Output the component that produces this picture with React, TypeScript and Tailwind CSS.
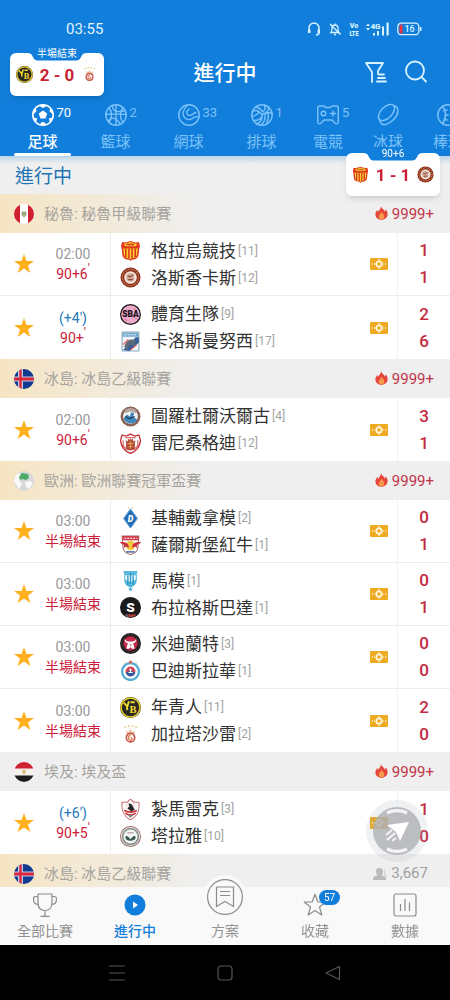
import React from "react";

type IconName =
  | "soccer" | "basket" | "tennis" | "volley" | "game" | "puck" | "base";

const cjk = "font-['Roboto','Noto_Sans_CJK_TC',sans-serif]";

function SportIcon({ name }: { name: IconName }) {
  const common = {
    viewBox: "0 0 24 24",
    className: "size-6",
    fill: "none",
    stroke: "currentColor",
    strokeWidth: 1.4,
    strokeLinecap: "round" as const,
    strokeLinejoin: "round" as const,
    "aria-hidden": true,
  };
  switch (name) {
    case "soccer":
      return (
        <svg {...common}>
          <circle cx="12" cy="12" r="10.2" strokeWidth="1.6" />
          <g fill="currentColor" stroke="none">
            <path d="M12 7.6l4.2 3-1.6 4.9H9.4l-1.6-4.9z" />
            <path d="M7.8 2.8L12 4.9l4.2-2.1L12 1.6zM1.8 11.4l3.6-3-.6-3.6-2.2 2.9zM22.2 11.4l-3.6-3 .6-3.6 2.2 2.9zM5 19.2l1.2-3.8-3.6-.8 1 2.6zM19 19.2l-1.2-3.8 3.6-.8-1 2.6zM9 21.9l1.2-2.6h3.6l1.2 2.6-3 .4z" />
          </g>
        </svg>
      );
    case "basket":
      return (
        <svg {...common}>
          <circle cx="12" cy="12" r="10.2" />
          <path d="M12 2v20M2 11.5c7-1 13-.8 20 0M5 4.8c3.4 3.8 3.400 10.600 0 14.400M19 4.800c-3.400 3.800-3.400 10.600 0 14.400M8.500 2.500c0 7 6 7 12 5M4 18c4-5 9-3 12 3" />
        </svg>
      );
    case "tennis":
      return (
        <svg {...common}>
          <circle cx="12" cy="12" r="10.200" />
          <path d="M10.500 2c-1 1.500-2.500 2.500-3.500 5-1.200 3-1 6.500 1.500 8.500 2.500 2 5.500 1 7.500-.5 2-1.600 4-1.500 6-1.200M12.500 6c-1.800.8-3 2.300-2.700 4 .3 2 2.200 2.800 4 2.200 2-.7 3-2.200 5-2.700" strokeWidth="1.300" />
        </svg>
      );
    case "volley":
      return (
        <svg {...common}>
          <circle cx="12" cy="12" r="10.200" />
          <path d="M12 11.500C9 8 5.500 6.800 3 8M13 9C10.500 5.500 8 4 5.500 4.200M12 11.500c4.500-1.500 7-4.500 6.500-7.500M12 11.500c.5 4.500-1.500 8-5.500 9.500M15 10.500c.5 4.500-.5 9-4.500 11.500M15 10.500c3.500-1.500 5.500-1.500 7 0M9.500 9c-2.500 2.500-6 4.500-7.300 4M11.800 14c-2 2.500-5 3.800-7.800 3.500M18 9.800c.8 3.500.2 7-1.500 10.500M13 9c1.800-1.500 2.500-4 1.500-6.500" />
        </svg>
      );
    case "game":
      return (
        <svg {...common}>
          <path d="M3.500 3h4.200c1 0 1.200 1.500 2.300 1.500h4c1.100 0 1.300-1.500 2.300-1.500h4.200c1.200 0 1.800 1 1.800 2v13.500c0 2-1.800 3-3.200 1.800L16 17H8l-3.100 3.300c-1.400 1.200-3.200.2-3.200-1.800V5c0-1 .6-2 1.800-2z" />
          <circle cx="7.500" cy="10.500" r="2.300" />
          <path d="M17 8v5M14.500 10.500h5" />
        </svg>
      );
    case "puck":
      return (
        <svg {...common}>
          <ellipse cx="10.500" cy="9.500" rx="10" ry="5.500" transform="rotate(-45 10.500 9.500)" />
          <path d="M3.400 16.600c.5 3.500 3 5.500 6 5 6-1.500 12-7.500 12.500-13.500.2-3-1.500-5-4.300-5.600" />
        </svg>
      );
    default:
      return (
        <svg {...common}>
          <circle cx="12" cy="12" r="10.200" />
          <path d="M6.500 3.500c4 4.500 4 12.500 0 17M17.500 3.500c-4 4.500-4 12.500 0 17M8 8l3-1M9 12h3M8 16l3 1" />
        </svg>
      );
  }
}

const tabs: { label: string; count?: string; icon: IconName; width: string }[] = [
  { label: "足球", count: "70", icon: "soccer", width: "w-[73px]" },
  { label: "籃球", count: "2", icon: "basket", width: "w-[73px]" },
  { label: "網球", count: "33", icon: "tennis", width: "w-[73px]" },
  { label: "排球", count: "1", icon: "volley", width: "w-[73px]" },
  { label: "電競", count: "5", icon: "game", width: "w-[60px]" },
  { label: "冰球", icon: "puck", width: "w-[60px]" },
  { label: "棒球", icon: "base", width: "w-[60px]" },
];

const svgText = {
  textAnchor: "middle" as const,
  fontFamily: "Roboto, sans-serif",
  fontWeight: 900,
};

const crests: Record<string, React.ReactNode> = {
  grau: (
    <>
      <path d="M2 2c3 1 5 0 8-1 3 1 5 2 8 1l1 4c-2 7 0 10-4 12-2 1-4 0-5 2-1-2-3-1-5-2C1 16 3 13 1 6z" fill="#e0391f" />
      <path d="M3 8h14c-1 4 0 8-3 9-2 .6-3 .3-4 1.500C9 17.300 8 17.600 6 17 3 16 4 12 3 8z" fill="#f8d030" />
      <path d="M5.500 8v8.500M8.500 8v9.500M11.500 8v9.500M14.500 8v8.500" stroke="#d8301c" strokeWidth="1.400" />
      <path d="M4 3.500l6-1.500 6 1.500-.5 2.500h-11z" fill="#f6c92d" />
      <path d="M6 5l1.500-1.500L9 5l1.500-1.500L12 5l1.500-1.500" stroke="#c9291d" fill="none" />
    </>
  ),
  chankas: (
    <>
      <circle cx="10" cy="10" r="9.500" fill="#8b2a1e" />
      <circle cx="10" cy="10" r="7.700" fill="none" stroke="#d9a35a" strokeWidth="1.200" strokeDasharray="1 1" />
      <circle cx="10" cy="10" r="6" fill="#f3e8dc" />
      <path d="M6 8c1-3 7-3 8 0l-1 1c2 2 0 5-3 5s-4-2-4-4z" fill="#d2a994" />
      <path d="M7.500 8.500l2 1 3-2M8 12h4" stroke="#843e35" fill="none" />
    </>
  ),
  sba: (
    <>
      <circle cx="10" cy="10" r="10" fill="#1b171b" />
      <circle cx="10" cy="10" r="8.800" fill="#eda9c8" />
      <path d="M3 6l14 9M4 14l3 2M13 4l3 2" stroke="#d783ae" />
      <text x="10" y="12.500" fontSize="8" fill="#17131a" {...svgText}>SBA</text>
    </>
  ),
  mannucci: (
    <>
      <path d="M2 1h16v18H2z" fill="#f3f7fa" stroke="#85a8bd" />
      <path d="M2.500 1.500h15v4h-15z" fill="#73a9ca" />
      <path d="M4 3.500h12" stroke="#e6f3fa" strokeDasharray="2 1" />
      <path d="M3 18L15 6l3 0v5L9 19z" fill="#345e9b" />
      <path d="M4 15c2-5 4-7 7-7l5 1-2 2v5l-2-3-3 1-2 4z" fill="#5c6979" />
      <path d="M3 13l5-5M10 18l6-5" stroke="#d84e56" />
    </>
  ),
  throttur: (
    <>
      <circle cx="10" cy="10" r="9.500" fill="#8c6257" />
      <circle cx="10" cy="10" r="7" fill="#f4f7f9" />
      <path d="M4 5c3-4 9-4 12 0l-1 2c-3-2-7-2-10 0z" fill="#b5a69e" />
      <path d="M3.500 12l3-4 3 2 1-4 3 1-1 3 4 3c-2 5-11 5-13-1z" fill="#3f87bd" />
      <path d="M5 10l4 2 5-2" stroke="#24384d" fill="none" />
    </>
  ),
  reynir: (
    <>
      <path d="M2 2l4 1 4-2 4 2 4-1 1.500 5C19 13 16 17 10 19.500 4 17 1 13 .5 7z" fill="#fff" stroke="#c9333d" strokeWidth="1.300" />
      <path d="M5 4.500h10M3 7v5l4 4M17 7v5l-4 4" stroke="#d34c50" fill="none" />
      <path d="M5.500 7l2 1V5.500l1.700 1L10 5l.8 1.500 1.700-1V8l2-1-.5 8c-2 2-6 2-8 0z" fill="#b34b38" />
      <path d="M7 10h6M8 13h4M10 8v7" stroke="#e8ae61" strokeWidth=".8" />
    </>
  ),
  kyiv: (
    <>
      <path d="M10 2L16.500 11 10 20 3.500 11z" fill="#226bb4" stroke="#5b9bd1" />
      <path d="M7.500.800h1M11.500.800h1" stroke="#d4b145" />
      <text x="10" y="14" fontSize="8.500" fontStyle="italic" fill="#fff" {...svgText}>D</text>
    </>
  ),
  salzburg: (
    <>
      <path d="M2 2h16l-1 12c-1 3-4 5-7 5.500C7 19 4 17 3 14z" fill="#fff" stroke="#a66a68" />
      <path d="M2.500 2h15v4h-15z" fill="#cf3847" />
      <path d="M4 4h12" stroke="#fff" strokeDasharray="2 .8" />
      <circle cx="10" cy="11" r="4.500" fill="#f5c63a" />
      <path d="M-.5 8c4-1 7 0 8.500 2.500l.5 2.500-3-1-2 1.500.5-3zM20.500 8c-4-1-7 0-8.500 2.500l-.5 2.500 3-1 2 1.500-.5-3z" fill="#c92c3d" />
      <path d="M6 17h8" stroke="#5373a8" strokeWidth="1.500" />
    </>
  ),
  malmo: (
    <>
      <path d="M3 1h14l-1 2v6c0 4-2 6-6 8-4-2-6-4-6-8V3z" fill="#58b7dc" />
      <path d="M5 5h10v4l-5 3-5-3z" fill="#f2fbfe" />
      <path d="M7.500 5v9M12.500 5v9M10 3v10" stroke="#2994c0" strokeWidth="1.300" />
      <path d="M10 16.500l.8 1.200h1.500l-1.200 1 .4 1.300-1.500-.8-1.500.8.400-1.300-1.200-1h1.500z" fill="#3eabd5" />
    </>
  ),
  sparta: (
    <>
      <circle cx="10" cy="10" r="10" fill="#1b1a1c" />
      <path d="M5 17.500c3 2 7 2 10 0v-1H5z" fill="#a63933" />
      <path d="M5 17.500l2 1.500 1-2z" fill="#3d6ca4" />
      <text x="10" y="14.500" fontSize="13" fill="#fff" {...svgText}>S</text>
    </>
  ),
  midt: (
    <>
      <circle cx="10" cy="10" r="10" fill="#211b1e" />
      <circle cx="10" cy="10" r="8.300" fill="none" stroke="#665b5f" strokeWidth=".8" strokeDasharray="1 1" />
      <circle cx="10" cy="10" r="6.800" fill="#c42b4c" />
      <path d="M4.500 5.500c.5 1.500 2 2.500 3.500 2.500h4c1.500 0 3-1 3.500-2.500.5 2.500-1 4-3 4.200L14 15H11.500L10 13.500 8.500 15H6l1.500-5.300c-2-.2-3.500-1.700-3-4.200z" fill="#fff" />
      <path d="M9 11h2l-1 1.500z" fill="#c42b4c" />
    </>
  ),
  slovan: (
    <>
      <circle cx="10" cy="11" r="8" fill="#fff" stroke="#54acd1" strokeWidth="2.200" />
      <circle cx="10" cy="11" r="4.700" fill="#d44356" />
      <path d="M5.500 12c3-2 6-2 9 0-.5 2-2 3.500-4.500 3.700-2.500-.2-4-1.700-4.500-3.700z" fill="#315ba0" />
      <path d="M10 8v4M8.700 9.500h2.600M8 12h4" stroke="#fff" />
      <path d="M10 0l.8 1.500L12 2l-1.200.7L10 4l-.8-1.300L8 2l1.200-.5zM4.500 2v2M15.500 2v2" fill="#d65157" stroke="#d98b61" strokeWidth=".5" />
    </>
  ),
  yb: (
    <>
      <circle cx="10" cy="10" r="10" fill="#2b2923" />
      <circle cx="10" cy="10" r="9" fill="none" stroke="#e8d02c" strokeWidth="1.500" />
      <path d="M3.500 5.500l3 3 .5 4M8.500 4L7 9M10 5h4" stroke="#f3d92b" strokeWidth="1.800" fill="none" />
      <text x="12.500" y="15.500" fontSize="10" fill="#f3d92b" {...svgText} fontFamily="Liberation Serif, serif">B</text>
    </>
  ),
  gala: (
    <>
      <path d="M4 3h2M7.500 2h2M11 2h2M14.500 3h2" stroke="#e5c581" strokeWidth="1.200" />
      <path d="M6 6l2 2 2-3 2 3 2-2-.5 4h-7z" fill="#e8b48d" />
      <circle cx="10" cy="13" r="4" fill="#fff7f1" stroke="#c84e49" strokeWidth="1.500" />
      <path d="M10 10.500c-3 1-2 5 0 5 2-.2 2-2.500 0-2.500" stroke="#db7958" fill="none" strokeWidth="1.200" />
    </>
  ),
  zamalek: (
    <>
      <path d="M2 3l5 0 3-3 3 3 5 0c1 8-1 13-8 17C3 16 1 11 2 3z" fill="#fff" stroke="#c9686c" />
      <path d="M5 5l5-2 5 2v3H5z" fill="#f5e8e6" />
      <path d="M4 11c4 2 8 2 12 0M5 13.500c3 2 7 2 10 0" stroke="#ce2f3c" strokeWidth="1.500" fill="none" />
      <path d="M8 4l3 1 3 5-3 2-4-3 2-2z" fill="#262626" />
      <path d="M7 15h6l-3 3z" fill="#838383" />
    </>
  ),
  gaish: (
    <>
      <circle cx="10" cy="10" r="9.500" fill="#fff" stroke="#9b6d6c" strokeWidth="1" />
      <circle cx="10" cy="10" r="7.500" fill="#f1f5f3" stroke="#87928e" strokeWidth="1.600" />
      <path d="M5 10.500c1-1.500 2-1 3.500.5l1.500 1.500 1.500-1.500c1.500-1.500 2.500-2 3.500-.5-.5 3-2.500 3.500-5 3.500s-4.500-.5-5-3.500z" fill="#3c5b50" />
      <path d="M7 6.500h6" stroke="#b98a89" />
    </>
  ),
};

function Crest({ id, size = "size-[21px]" }: { id: string; size?: string }) {
  return (
    <svg viewBox="0 0 20 20" className={`${size} shrink-0`} aria-hidden="true">
      {crests[id]}
    </svg>
  );
}

function Flag({ id }: { id: string }) {
  return (
    <svg viewBox="0 0 20 20" className="size-5 shrink-0 overflow-hidden rounded-full" aria-hidden="true">
      {id === "peru" && (
        <>
          <path d="M0 0h20v20H0z" fill="#fff" />
          <path d="M0 0h6v20H0zM14 0h6v20h-6z" fill="#cf2030" />
          <path d="M8 8h4v3l-2 2-2-2z" fill="#a5b389" stroke="#7f9561" strokeWidth=".7" />
        </>
      )}
      {id === "iceland" && (
        <>
          <path d="M0 0h20v20H0z" fill="#113b91" />
          <path d="M4 0h5v20H4zM0 7.500h20v5H0z" fill="#fff" opacity=".75" />
          <path d="M5.300 0h2.400v20H5.300zM0 8.600h20v2.800H0z" fill="#d9263c" />
        </>
      )}
      {id === "europe" && (
        <>
          <path d="M0 0h20v20H0z" fill="#d5d9da" />
          <path d="M1 4l4-2 3 4-3 3 3 4-3 5-5-7zM11 11l5-1 3 2-4 6-3-2z" fill="#f9f9f9" />
          <path d="M5 6l3-4 6 1 1 4-3 2-4-1-2 1z" fill="#4ca966" />
        </>
      )}
      {id === "egypt" && (
        <>
          <path d="M0 0h20v20H0z" fill="#f5f2ed" />
          <path d="M0 0h20v6.500H0z" fill="#cd2030" />
          <path d="M0 13.500h20V20H0z" fill="#1c1c1e" />
          <path d="M8.500 8h3v3.500h-3z" fill="#dcb368" />
        </>
      )}
    </svg>
  );
}

type Match = {
  time: string;
  added?: boolean;
  state: string;
  tick?: boolean;
  teams: [string, string, string, string][];
};
type League = { flag: string; name: string; hot?: string; viewers?: string; warm: boolean; matches: Match[] };

const half = "半場結束";
const leagues: League[] = [
  {
    flag: "peru", name: "秘魯: 秘魯甲級聯賽", hot: "9999+", warm: true,
    matches: [
      { time: "02:00", state: "90+6", tick: true, teams: [["grau", "格拉烏競技", "[11]", "1"], ["chankas", "洛斯香卡斯", "[12]", "1"]] },
      { time: "(+4')", added: true, state: "90+", tick: true, teams: [["sba", "體育生隊", "[9]", "2"], ["mannucci", "卡洛斯曼努西", "[17]", "6"]] },
    ],
  },
  {
    flag: "iceland", name: "冰島: 冰島乙級聯賽", hot: "9999+", warm: true,
    matches: [
      { time: "02:00", state: "90+6", tick: true, teams: [["throttur", "圖羅杜爾沃爾古", "[4]", "3"], ["reynir", "雷尼桑格迪", "[12]", "1"]] },
    ],
  },
  {
    flag: "europe", name: "歐洲: 歐洲聯賽冠軍盃賽", hot: "9999+", warm: true,
    matches: [
      { time: "03:00", state: half, teams: [["kyiv", "基輔戴拿模", "[2]", "0"], ["salzburg", "薩爾斯堡紅牛", "[1]", "1"]] },
      { time: "03:00", state: half, teams: [["malmo", "馬模", "[1]", "0"], ["sparta", "布拉格斯巴達", "[1]", "1"]] },
      { time: "03:00", state: half, teams: [["midt", "米迪蘭特", "[3]", "0"], ["slovan", "巴迪斯拉華", "[1]", "0"]] },
      { time: "03:00", state: half, teams: [["yb", "年青人", "[11]", "2"], ["gala", "加拉塔沙雷", "[2]", "0"]] },
    ],
  },
  {
    flag: "egypt", name: "埃及: 埃及盃", hot: "9999+", warm: false,
    matches: [
      { time: "(+6')", added: true, state: "90+5", tick: true, teams: [["zamalek", "紮馬雷克", "[3]", "1"], ["gaish", "塔拉雅", "[10]", "0"]] },
    ],
  },
  { flag: "iceland", name: "冰島: 冰島乙級聯賽", viewers: "3,667", warm: true, matches: [] },
];

function StatusIcons() {
  return (
    <div className="flex items-center gap-[7px] text-[#d6f3ff]">
      <svg viewBox="0 0 14 14" className="size-3.5" fill="none" stroke="currentColor" strokeWidth="1.500" aria-hidden="true">
        <path d="M2 8V6a5 5 0 0 1 10 0v5c0 1.300-1 1.800-3 1.800" />
        <path d="M2.200 7.500v3.500M11.800 7.500v3.500" strokeWidth="2.500" />
      </svg>
      <svg viewBox="0 0 14 14" className="size-3.5" fill="none" stroke="currentColor" strokeWidth="1.300" aria-hidden="true">
        <path d="M3 10.500c1-1 1-2.500 1-4.500a3 3 0 0 1 6 0c0 2 0 3.500 1 4.500zM6 12.500h2M7 1.500V3M2 2l10.500 10.500" />
      </svg>
      <svg viewBox="0 0 10 14" className="h-3.5 w-2.5" fill="currentColor" aria-hidden="true">
        <text x="5" y="6" fontSize="7" {...svgText}>Vo</text>
        <text x="5" y="13.500" fontSize="6.500" {...svgText} fontFamily="Roboto Condensed, Roboto, sans-serif">LTE</text>
      </svg>
      <svg viewBox="0 0 24 14" className="h-3.5 w-6" fill="currentColor" aria-hidden="true">
        <path d="M0 4l2-2.500L4 4zM0 6h4L2 8.500z" />
        <text x="9.500" y="6.500" fontSize="8" {...svgText}>4G</text>
        <path d="M7 11h2v2.500H7zM11 9h2v4.500h-2zM16 4.500h2v9h-2zM20.500 .5h2.200v13h-2.200z" />
      </svg>
      <svg viewBox="0 0 25 14" className="h-3.5 w-[25px]" fill="none" aria-hidden="true">
        <rect x=".8" y="1.200" width="21" height="11.500" rx="3.500" stroke="currentColor" strokeWidth="1.300" />
        <path d="M23 5h1.500v4H23z" fill="currentColor" />
        <path d="M2.500 3.500c1-1 2-1 3-1v9c-1 0-2 0-3-1z" fill="#ee3345" />
        <text x="12.500" y="10.200" fontSize="9" fill="currentColor" {...svgText} fontWeight={500}>16</text>
      </svg>
    </div>
  );
}

function ScoreCard({ label, score, home, away, place }: { label: string; score: string; home: string; away: string; place: string }) {
  return (
    <div className={`absolute ${place} z-20 flex h-[43px] w-[94px] items-center justify-between rounded-md bg-white px-1.5 shadow-md`}>
      <div className="absolute -top-2 left-1/2 flex h-4 w-[59px] -translate-x-1/2 items-center justify-center">
        <svg viewBox="0 0 59 16" className="absolute inset-0 h-full w-full" aria-hidden="true">
          <path d="M8 2h43v6h8c-4 0-5 3-6 5-1 2-3 2.500-5 2.500H11c-2 0-4-.5-5-2.500-1-2-2-5-6-5h8z" fill="#117edb" />
        </svg>
        <span className="relative pt-0.5 text-[10px] leading-4 whitespace-nowrap text-white">{label}</span>
      </div>
      <Crest id={home} size="size-[17px]" />
      <span className="text-[17px] leading-5 font-bold whitespace-pre text-[#c91f35]">{score}</span>
      <Crest id={away} size="size-[17px]" />
    </div>
  );
}

function Header() {
  return (
    <header className="relative z-10 bg-[#117edb] text-white">
      <div className="flex h-11 items-center justify-between pt-3.5 pr-7 pl-[66px]">
        <time className="text-[15px] text-[#e0f5ff]">03:55</time>
        <StatusIcons />
      </div>
      <div className="grid h-14 grid-cols-[1fr_auto_1fr] items-center">
        <h1 className="col-start-2 pt-[3px] text-[21px] font-medium">進行中</h1>
        <div className="flex justify-end gap-4 pr-[22px]">
          <button type="button" aria-label="篩選">
            <svg viewBox="0 0 24 24" className="size-6" fill="none" stroke="#d9f3ff" strokeWidth="1.800" strokeLinecap="round" strokeLinejoin="round">
              <path d="M8 22V12L2 3h17l-5 8v3M15 14.500h5M14 18h7M13 21.500h9" />
            </svg>
          </button>
          <button type="button" aria-label="搜尋">
            <svg viewBox="0 0 24 24" className="size-6" fill="none" stroke="#d9f3ff" strokeWidth="1.800" strokeLinecap="round">
              <circle cx="11" cy="10.500" r="9" /><path d="M17.500 17l4.500 4.500" />
            </svg>
          </button>
        </div>
      </div>
      <nav className="overflow-hidden pl-[6px]">
        <div className="flex h-14">
          {tabs.map((t, i) => (
            <button key={t.label} type="button" className={`relative flex shrink-0 flex-col items-center gap-[5px] pt-[3px] ${t.width} ${i === 0 ? "text-white" : "text-[#7cc2f8]"}`}>
              <span className="relative">
                <SportIcon name={t.icon} />
                {t.count && <span className="absolute top-0.5 left-[26px] text-[13px] leading-4">{t.count}</span>}
              </span>
              <span className={`text-[15px] leading-5 ${i === 0 ? "font-medium" : ""}`}>{t.label}</span>
              {i === 0 && <span className="absolute bottom-0 h-[3px] w-[57px] rounded-sm bg-white" />}
            </button>
          ))}
        </div>
      </nav>
    </header>
  );
}

function Flame() {
  return (
    <svg viewBox="0 0 14 15" className="mb-0.5 h-3.5 w-[13px]" aria-hidden="true">
      <path d="M6.500 0c.5 3 3.500 3.500 4 6 .8-.5.900-1.500.9-2.500C13 5 14 7.500 13.500 10c-.6 3-3.500 5-6.500 5s-6-2-6.500-5C0 7.500 1.500 5.500 2.500 4c.1 1 .2 1.700.8 2.200C4.500 4 6.500 3 6.500 0z" fill="#e4473a" />
      <path d="M7.200 6c.3 2 2.800 2.800 2.800 5.300 0 2-1.300 3.200-3 3.200s-3-1.200-3-3C4 9 6.800 8.500 7.200 6z" fill="#f6994b" />
    </svg>
  );
}

function LeagueSection({ league }: { league: League }) {
  return (
    <section>
      <div className={`flex h-[39px] items-center bg-[#efefef] pr-4 pl-3.5 ${league.warm ? "bg-linear-to-r from-[#f6e5c3] to-[#efefef] to-45%" : ""}`}>
        <Flag id={league.flag} />
        <h2 className="ml-2.5 flex-1 pt-px text-[15px] text-[#a6a39e]">{league.name}</h2>
        {league.hot && (
          <span className="flex items-center gap-1 pt-px text-[15px] text-[#c23347]"><Flame />{league.hot}</span>
        )}
        {league.viewers && (
          <span className="mr-1.5 flex items-center gap-1 text-[15px] text-[#a0a0a0]">
            <svg viewBox="0 0 14 14" className="size-3.5" fill="#bababa" aria-hidden="true">
              <path d="M6.500 1c2.500 0 3.500 1.500 3.500 3.500S9 8 8.500 8.500c2.500.5 4.500 1 4.500 3V13H0v-1.500c0-2 2-2.500 4.500-3C4 8 3 6.500 3 4.500S4 1 6.500 1z" />
              <path d="M11 2c1.500.5 2 3.500.5 5 1.500.5 2.500 1 2.500 3h-1c-.5-1-1.500-1.500-2.500-2 1-2 1-4 .5-6z" opacity=".6" />
            </svg>
            {league.viewers}
          </span>
        )}
      </div>
      <ul className="divide-y divide-[#ededed]">
        {league.matches.map((m) => (
          <MatchRow key={m.teams[0][0]} match={m} />
        ))}
      </ul>
    </section>
  );
}

function MatchRow({ match: m }: { match: Match }) {
  return (
    <li className="flex h-[63px] bg-white">
      <button type="button" aria-label="收藏" className="flex w-9 shrink-0 items-center justify-end pr-0.5">
        <svg viewBox="0 0 20 20" className="size-5" fill="#ffb01f">
          <path d="M10 0l2.500 7H20l-6 4.500L16.300 19 10 14.500 3.700 19 6 11.500 0 7h7.500z" />
        </svg>
      </button>
      <div className="flex w-[75px] shrink-0 flex-col items-center justify-center border-r border-[#ededed] text-[14px] leading-5">
        <span className={m.added ? "text-[#2479b8]" : "text-[#999]"}>{m.time}</span>
        <span className="text-[#cb2039]">
          {m.state}
          {m.tick && <sup className="text-[12px]">'</sup>}
        </span>
      </div>
      <div className="flex min-w-0 flex-1 flex-col justify-center pl-[9px]">
        {m.teams.map(([id, name, rank]) => (
          <div key={id} className="flex h-[27px] items-center">
            <Crest id={id} />
            <span className="ml-2.5 truncate text-[17px] leading-6 text-[#333]">{name}</span>
            <span className="ml-0.5 text-[12px] text-[#a3a3a3]">{rank}</span>
          </div>
        ))}
      </div>
      <div className="flex w-7 shrink-0 items-center border-r border-[#f2f2f2]">
        <svg viewBox="0 0 18 12" className="h-3 w-[18px]" aria-hidden="true">
          <rect width="18" height="12" rx="1" fill="#eeab22" />
          <path d="M1.500 6l1.500-1v2zM16.500 6L15 5v2z" fill="#fff" />
          <circle cx="9" cy="6" r="2.700" fill="none" stroke="#fff6dc" strokeWidth="1.800" />
          <path d="M9 1v2M9 9v2M4 6h1M13 6h1" stroke="#fff6dc" strokeWidth="1.200" />
        </svg>
      </div>
      <div className="flex w-[52px] shrink-0 flex-col items-center justify-center text-[17px] font-medium text-[#c22a40]">
        {m.teams.map(([id, , , score]) => (
          <span key={id} className="leading-[27px]">{score}</span>
        ))}
      </div>
    </li>
  );
}

function NavIcon({ id }: { id: string }) {
  return (
    <svg viewBox="0 0 24 24" className="size-6" fill="none" stroke="#8c8c8c" strokeWidth="1.200" strokeLinejoin="round" aria-hidden="true">
      {id === "cup" && <path d="M5 1h14v9c0 5-3 7.500-7 7.500S5 15 5 10zM5 3.500H2.500C1 3.500.5 4.500.5 6c0 3.500 1.500 5.500 4.800 5.500M19 3.500h2.500c1.500 0 2 1 2 2.500 0 3.500-1.500 5.500-4.800 5.500M12 17.500V23M7.500 23.300h9" />}
      {id === "live" && (
        <>
          <circle cx="12" cy="12" r="10.500" fill="#117edb" stroke="none" />
          <path d="M10 8.500l5 3.500-5 3.500z" fill="#fff" stroke="none" />
        </>
      )}
      {id === "fav" && <path d="M12 1.200l2.800 7.600 8 .2-6.300 5 2.300 8L12 17.500 5.200 22l2.300-8-6.300-5 8-.2z" />}
      {id === "data" && (
        <>
          <rect x="1" y="1" width="22" height="22" rx="2" />
          <path d="M7.500 11v7M12 6v12M16.500 9.500V18" />
        </>
      )}
    </svg>
  );
}

const navItems = [
  { id: "cup", label: "全部比賽" },
  { id: "live", label: "進行中" },
  { id: "plan", label: "方案" },
  { id: "fav", label: "收藏" },
  { id: "data", label: "數據" },
];

function BottomNav() {
  return (
    <nav className="relative z-10 grid h-[58px] shrink-0 grid-cols-5 bg-[#f9f9f9]">
      {navItems.map((n) => (
        <a key={n.id} href={`#${n.id}`} className={`relative flex flex-col items-center justify-end pb-1 text-[14px] leading-5 ${n.id === "live" ? "font-medium text-[#117edb]" : "text-[#929292]"}`}>
          {n.id === "plan" ? (
            <span className="absolute -top-3 flex size-11 items-center justify-center rounded-full bg-[#f9f9f9]">
              <svg viewBox="0 0 36 36" className="size-9" fill="none" stroke="#8c8c8c" strokeWidth="1.200" aria-hidden="true">
                <circle cx="18" cy="18" r="17.400" />
                <path d="M9.500 8h17v19.500L18 22.500l-8.500 5zM13 12.500h10M13 16.500h10" />
              </svg>
            </span>
          ) : (
            <span className="relative mb-1">
              <NavIcon id={n.id} />
              {n.id === "fav" && (
                <span className="absolute -top-[3px] left-4 flex h-[15px] w-[21px] items-center justify-center rounded-full bg-[#117edb] text-[10px] leading-none text-white">57</span>
              )}
            </span>
          )}
          {n.label}
        </a>
      ))}
    </nav>
  );
}

function SystemBar() {
  const style = { viewBox: "0 0 16 16", className: "size-4", fill: "none", stroke: "#565656", strokeWidth: 1.2, strokeLinejoin: "round" as const };
  return (
    <div className="flex h-[55px] shrink-0 items-center justify-center gap-[92px] bg-black">
      <button type="button" aria-label="最近"><svg {...style}><path d="M0 1h16M0 8h16M0 15h16" /></svg></button>
      <button type="button" aria-label="主畫面"><svg {...style}><rect x="1" y="1" width="14" height="14" rx="3" /></svg></button>
      <button type="button" aria-label="返回"><svg {...style}><path d="M14.500 1.500v13L1 8z" /></svg></button>
    </div>
  );
}

export default function App() {
  return (
    <div className={`${cjk} relative flex h-screen flex-col overflow-hidden bg-[#efefef]`} lang="zh-Hant">
      <Header />
      <ScoreCard label="半場結束" score="2 - 0" home="yb" away="gala" place="top-[53px] left-2.5" />
      <ScoreCard label="90+6" score="1 - 1" home="grau" away="chankas" place="top-[153px] right-2.5" />
      <div className="relative min-h-0 flex-1">
        <main className="h-full overflow-y-auto [scrollbar-width:none]">
          <div className="flex h-[38px] items-center bg-linear-to-b from-[#b9d3e8] to-[#efefef] to-20% pt-1 pl-[15px] text-[19px] text-[#1f74b3]">進行中</div>
          {leagues.map((l, i) => (
            <LeagueSection key={i} league={l} />
          ))}
        </main>
        <button type="button" aria-label="重新整理" className="absolute right-[22px] bottom-[25px] flex size-[62px] items-center justify-center rounded-full bg-gray-400/15">
          <svg viewBox="0 0 48 48" className="size-12" aria-hidden="true">
            <circle cx="24" cy="24" r="24" fill="#aeb0b4" opacity=".8" />
            <path d="M14 6c6-3 14-3 20 0M14 42c6 3 14 3 20 0" stroke="#f4f4f4" strokeWidth="3.500" fill="none" />
            <path d="M14 18l22-3-9 19-4-9z" fill="#fff" />
            <path d="M13 28l6-5M14 33l8-7M19 34l4-3" stroke="#f4f4f4" strokeWidth="2" />
          </svg>
        </button>
      </div>
      <BottomNav />
      <SystemBar />
    </div>
  );
}
